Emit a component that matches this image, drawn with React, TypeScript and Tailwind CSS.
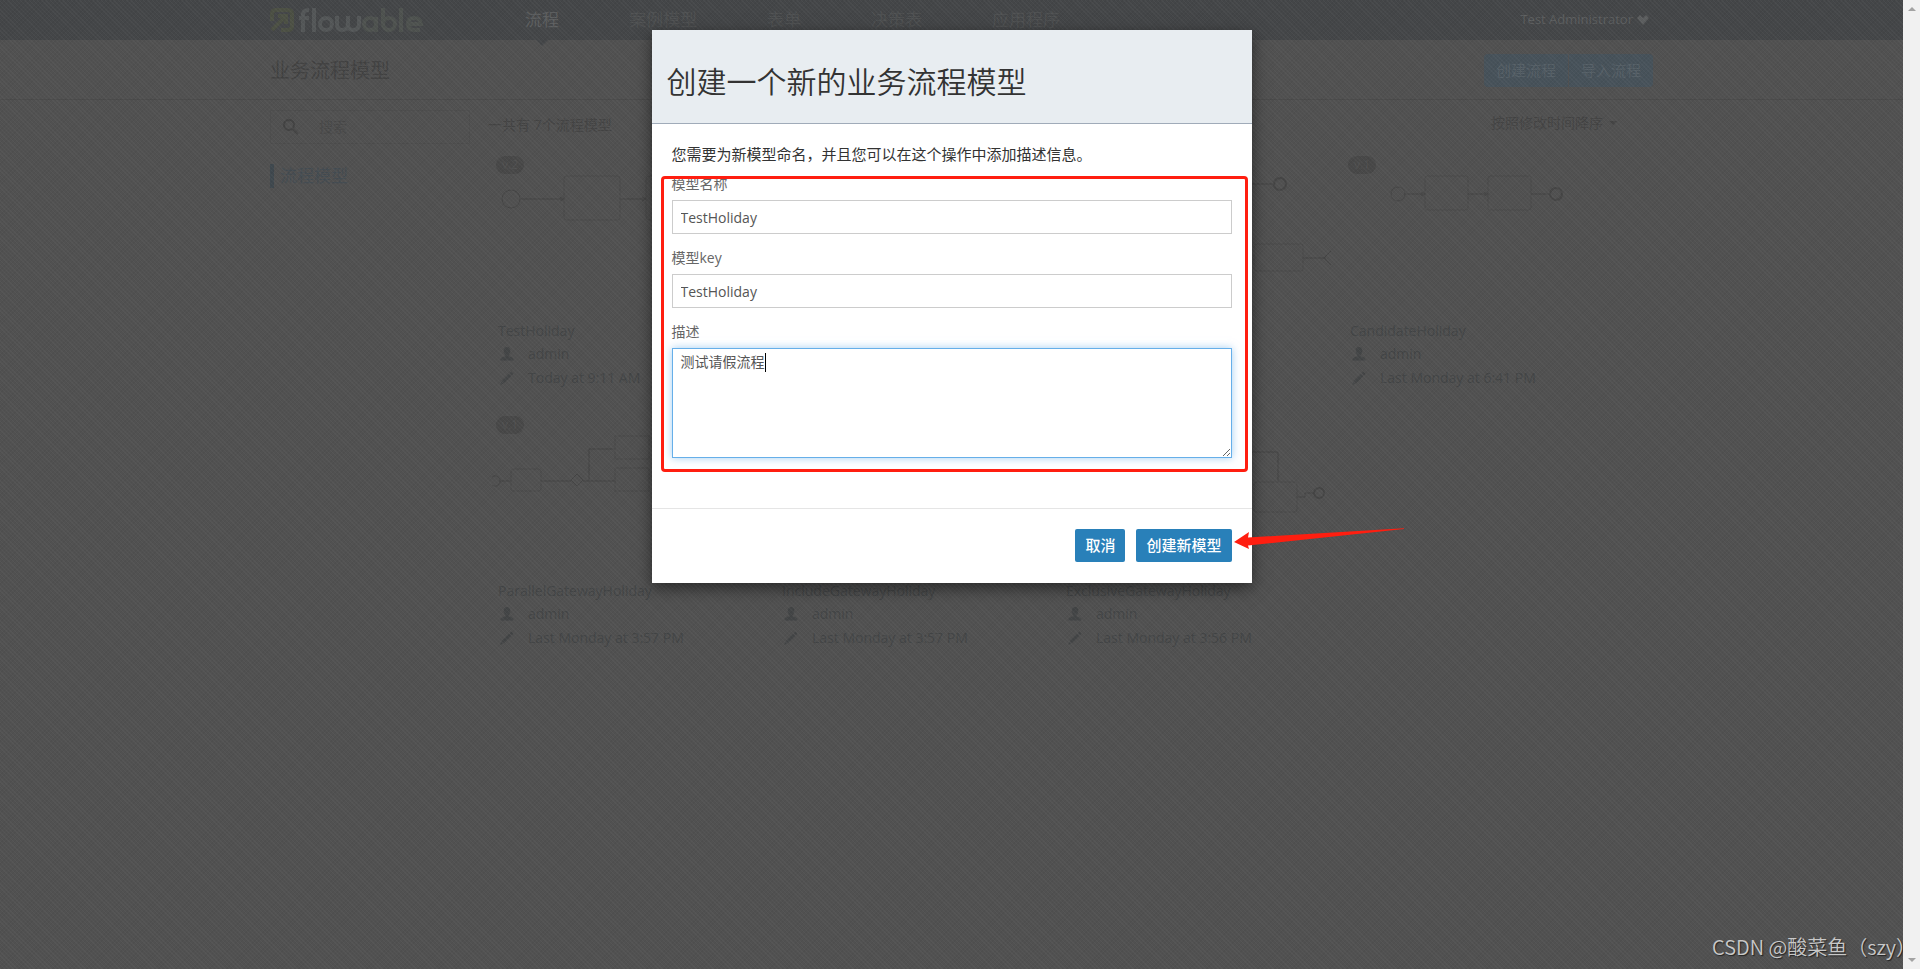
import React from 'react';

interface DiagramModel {
    id: number;
    name?: string;
    modified?: string;
    version?: string;
    drawing?: React.ReactNode;
}

const navItems = ['流程', '案例模型', '表单', '决策表', '应用程序'];

const models: DiagramModel[] = [
    {
        id: 1,
        name: 'TestHoliday',
        modified: 'Today at 9:11 AM',
        version: 'v.2',
        drawing: (
            <>
                <circle cx="15" cy="43" r="9" />
                <path d="M24 43H68M124 43H150" />
                <path d="M64 41L68 43L64 45M146 41L150 43L146 45" />
                <rect x="68" y="20" width="56" height="44" rx="3" stroke="#4b4b4b" />
                <rect x="150" y="20" width="56" height="44" rx="3" stroke="#4b4b4b" />
            </>
        ),
    },
    { id: 2 },
    {
        id: 3,
        drawing: (
            <>
                <path d="M176 28H209M239 102H262M267 95L260 102L267 109" />
                <circle cx="216" cy="28" r="6" strokeWidth="2" />
                <rect x="190" y="88" width="49" height="27" rx="2" stroke="#4b4b4b" />
            </>
        ),
    },
    {
        id: 4,
        name: 'CandidateHoliday',
        modified: 'Last Monday at 6:41 PM',
        version: 'v.1',
        drawing: (
            <>
                <circle cx="50" cy="38" r="7" />
                <rect x="77" y="20" width="43" height="34" rx="2" stroke="#4b4b4b" />
                <rect x="140" y="20" width="43" height="34" rx="2" stroke="#4b4b4b" />
                <path d="M57 38H77M120 38H140M183 38H201" />
                <path d="M73 36L77 38L73 40M136 36L140 38L136 40" />
                <circle cx="208" cy="38" r="6" strokeWidth="2" />
            </>
        ),
    },
    {
        id: 5,
        name: 'ParallelGatewayHoliday',
        modified: 'Last Monday at 3:57 PM',
        version: 'v.1',
        drawing: (
            <>
                <path d="M-4 69A5 5 0 1 0 -4 61M3 65H15M45 65H75M87 65H120M93 65V33H119" />
                <rect x="15" y="53" width="30" height="22" rx="2" stroke="#4b4b4b" />
                <path d="M75 64L81 58L87 64L81 70Z" />
                <rect x="119" y="20" width="34" height="23" stroke="#4b4b4b" />
                <rect x="119" y="52" width="34" height="23" stroke="#4b4b4b" />
            </>
        ),
    },
    { id: 6, name: 'IncludeGatewayHoliday', modified: 'Last Monday at 3:57 PM' },
    {
        id: 7,
        name: 'ExclusiveGatewayHoliday',
        modified: 'Last Monday at 3:56 PM',
        drawing: (
            <>
                <path d="M188 36H214V66M233 81H241V77H249" />
                <rect x="190" y="66" width="43" height="30" rx="2" stroke="#4b4b4b" />
                <circle cx="255" cy="77" r="5" strokeWidth="2" />
            </>
        ),
    },
];

const Logo: React.FC = () => (
    <a href="#" aria-label="flowable" className="flex w-[255px] items-center gap-1">
        <svg className="h-6 w-6" viewBox="0 0 24 24" fill="none" stroke="#4c5044" strokeWidth="4">
            <path d="M2 13V6Q2 2 6 2H18Q22 2 22 6V18Q22 22 18 22H11" />
            <path d="M2 22L15 9M8 8H16V16" />
        </svg>
        <svg className="h-6 w-[126px]" viewBox="0 0 124 24" fill="none" stroke="#545758" strokeWidth="4">
            <path d="M4 24V6Q4 2 10 2M0 10H10M15 0V24" />
            <circle cx="27" cy="16" r="6" />
            <path d="M38 8V16Q38 22 43 22Q49 22 49 16V8V16Q49 22 54 22Q60 22 60 16V8" />
            <g stroke="#4e524f">
                <circle cx="71" cy="16" r="6" />
                <path d="M77 9V24M84 0V16" />
                <circle cx="90" cy="16" r="6" />
                <path d="M102 0V24" />
                <path d="M108 16H122Q121 10 115 10Q109 10 109 16Q109 22 115 22H121" />
            </g>
        </svg>
    </a>
);

const UserIcon: React.FC = () => (
    <svg className="h-[14px] w-[14px]" viewBox="0 0 14 14" fill="currentColor">
        <path d="M7 0C9 0 10.3 1.6 10.3 4C10.3 5.8 9.5 7.2 8.6 8V9.2C11 10 13.5 10.8 13.5 13V13.5H.5V13C.5 10.8 3 10 5.4 9.2V8C4.5 7.2 3.7 5.8 3.7 4C3.7 1.6 5 0 7 0Z" />
    </svg>
);

const PencilIcon: React.FC = () => (
    <svg className="h-[14px] w-[14px]" viewBox="0 0 14 14" fill="currentColor">
        <path d="M11.3 .5L13.5 2.7L12 4.2L9.8 2ZM9 2.8L11.2 5L4 12.2L1.8 10ZM1.2 10.7L3.3 12.8L.3 13.7Z" />
    </svg>
);

const ModelCard: React.FC<{ model: DiagramModel }> = ({ model }) => (
    <article className="h-[260px] text-[#434546]">
        <div className="relative h-[164px]">
            {model.version && (
                <span className="absolute top-0 left-0 w-7 rounded-full bg-[#484848] text-center text-xs leading-[18px] text-[#515151]">{model.version}</span>
            )}
            <svg className="h-full w-full overflow-visible" fill="none" stroke="#454545">{model.drawing}</svg>
        </div>
        {model.name && (
            <>
                <h4 className="pl-0.5 text-sm leading-[22px]">{model.name}</h4>
                <div className="flex h-6 items-center gap-[14px] pl-1 text-sm"><UserIcon />admin</div>
                <div className="flex h-6 items-center gap-[14px] pl-1 text-sm"><PencilIcon />{model.modified}</div>
            </>
        )}
    </article>
);

const containerClass = 'mx-auto flex max-w-[1403px] pl-5';

const BackgroundPage: React.FC = () => (
    <div className="min-h-screen bg-[#515151]">
        <header className="h-10 bg-[#444648]">
            <div className={`h-full items-center text-[#4f5152] ${containerClass}`}>
                <Logo />
                <nav className="flex h-full flex-1 items-center gap-[70px] text-[17px]">
                    {navItems.map((item, index) => (
                        <a key={item} href="#" className={index === 0 ? 'relative text-[#5c5e5f]' : ''}>
                            {item}
                            {index === 0 && (
                                <span className="absolute top-[33px] left-1/2 -ml-1.5 border-x-6 border-t-6 border-x-transparent border-t-[#444648]" />
                            )}
                        </a>
                    ))}
                </nav>
                <button type="button" className="flex items-center gap-1 pr-1 text-[13px] text-[#5c5e5f]">
                    Test Administrator
                    <svg className="h-3 w-3" viewBox="0 0 12 12" fill="currentColor">
                        <path d="M0 4L3 1L6 4L9 1L12 4L6 11Z" />
                    </svg>
                </button>
            </div>
        </header>
        <div className="h-[60px] border-b border-[#4a4a4a]">
            <div className={`h-full items-center justify-between pt-0.5 ${containerClass}`}>
                <h1 className="text-xl text-[#424242]">业务流程模型</h1>
                <div className="flex gap-px text-[15px] text-[#566067]">
                    <button type="button" className="h-[33px] w-[84px] rounded-l-sm bg-[#47525a]">创建流程</button>
                    <button type="button" className="h-[33px] w-[84px] rounded-r-sm bg-[#47525a]">导入流程</button>
                </div>
            </div>
        </div>
        <div className={`pt-[10px] ${containerClass}`}>
            <aside className="w-[226px] shrink-0">
                <div className="flex h-[34px] w-[200px] items-center gap-5 border border-[#4d4d4d] pl-3 text-[#434343]">
                    <svg className="h-4 w-4" viewBox="0 0 16 16" fill="none" stroke="currentColor" strokeWidth="2">
                        <circle cx="6" cy="6" r="5" />
                        <path d="M10 10L15 15" />
                    </svg>
                    <input aria-label="搜索" placeholder="搜索" className="w-32 text-sm placeholder:text-[#484848]" />
                </div>
                <a href="#" className="mt-5 block h-6 border-l-4 border-[#3f484e] pl-1.5 text-[17px] leading-6 text-[#444c52]">流程模型</a>
            </aside>
            <main className="min-w-0 flex-1">
                <div className="-ml-2 flex h-[46px] items-start justify-between pr-9 text-sm leading-[30px] text-[#444]">
                    <span>一共有 7个流程模型</span>
                    <button type="button" className="flex items-center gap-1.5 leading-[26px]">
                        按照修改时间降序
                        <span className="border-x-4 border-t-4 border-x-transparent border-t-[#444]" />
                    </button>
                </div>
                <div className="-mr-10 grid grid-cols-[repeat(4,284px)]">
                    {models.map(model => <ModelCard key={model.id} model={model} />)}
                </div>
            </main>
        </div>
    </div>
);

const inputClass = 'block h-[34px] w-full border border-[#ccc] bg-white px-2 text-sm text-[#555] outline-none';
const buttonClass = 'h-[33px] rounded-xs bg-[#2980b9] px-2.5 text-[15px] font-medium text-white';

const CreateModelDialog: React.FC = () => (
    <form role="dialog" aria-labelledby="dialog-title" className="relative w-[600px] bg-white shadow-[0_5px_15px_rgba(0,0,0,0.5)]">
        <header className="border-b border-[#a0abb9] bg-[#e8edf1] px-[15px] pt-[35px] pb-[25px]">
            <h2 id="dialog-title" className="text-3xl leading-[33px] font-[350] text-[#333]">创建一个新的业务流程模型</h2>
        </header>
        <div className="px-5 pt-[19px]">
            <p className="text-[15px] leading-[22px] text-[#333]">您需要为新模型命名，并且您可以在这个操作中添加描述信息。</p>
            <div className="mt-[10px] space-y-[15px] pb-[50px] text-sm text-[#666]">
                <div>
                    <label htmlFor="name" className="block h-[25px] leading-[18px]">模型名称</label>
                    <input id="name" defaultValue="TestHoliday" className={inputClass} />
                </div>
                <div>
                    <label htmlFor="key" className="block h-[25px] leading-[18px]">模型key</label>
                    <input id="key" defaultValue="TestHoliday" className={inputClass} />
                </div>
                <div className="relative">
                    <label htmlFor="description" className="block h-[25px] leading-[18px]">描述</label>
                    <textarea
                        id="description"
                        defaultValue="测试请假流程"
                        className="block h-[110px] w-full border border-[#66afe9] bg-white px-2 py-1 text-sm leading-[18px] text-[#555] shadow-[0_0_8px_rgba(102,175,233,0.6)] outline-none"
                    />
                    <span className="absolute top-[30px] left-[93px] h-[19px] w-px bg-black" />
                </div>
            </div>
        </div>
        <footer className="flex justify-end gap-[11px] border-t border-[#e5e5e5] px-5 pt-5 pb-[21px]">
            <button type="button" className={buttonClass}>取消</button>
            <button type="submit" className={buttonClass}>创建新模型</button>
        </footer>

        {/* highlight frame and arrow */}
        <div className="pointer-events-none absolute top-[146px] left-[9px] h-[296px] w-[587px] rounded border-3 border-[#ff1e10]" />
        <svg className="pointer-events-none absolute top-[498px] left-[582px] h-6 w-[171px]" viewBox="0 0 171 24" fill="#ff1e10">
            <path d="M0 14L15 4L14 9.5L170 .2V1L14 17.5L15 21Z" />
        </svg>
    </form>
);

const ScrollBar: React.FC = () => (
    <div className="flex w-[17px] shrink-0 flex-col items-center justify-between bg-[#f1f1f1] py-[7px]">
        <span className="border-x-4 border-b-4 border-x-transparent border-b-[#a3a3a3]" />
        <span className="border-x-4 border-t-4 border-x-transparent border-t-[#a3a3a3]" />
    </div>
);

export default function App() {
    return (
        <div className="flex h-screen overflow-hidden font-['Open_Sans','Noto_Sans_CJK_SC',sans-serif]">
            <div className="relative min-w-0 flex-1 overflow-hidden">
                <BackgroundPage />
                <div className="absolute inset-0 flex items-start justify-center bg-[repeating-linear-gradient(45deg,rgba(255,255,255,0.03)_0_1px,transparent_1px_3px),repeating-linear-gradient(-45deg,rgba(0,0,0,0.04)_0_1px,transparent_1px_3px)] pt-[30px]">
                    <CreateModelDialog />
                </div>
                <div className="absolute right-[-13px] bottom-2 font-['Noto_Sans_CJK_SC',sans-serif] text-xl font-[350] text-[#c8c8c8] [text-shadow:1px_1px_1px_#222]">
                    CSDN @酸菜鱼（szy）
                </div>
            </div>
            <ScrollBar />
        </div>
    );
}
